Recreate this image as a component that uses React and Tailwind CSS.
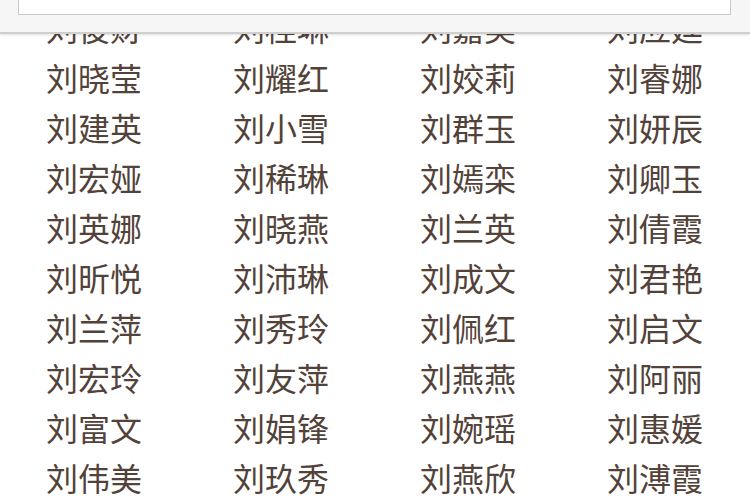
import React from "react";

const rows = [
  ["刘俊财", "刘桂琳", "刘嘉美", "刘应廷"],
  ["刘晓莹", "刘耀红", "刘姣莉", "刘睿娜"],
  ["刘建英", "刘小雪", "刘群玉", "刘妍辰"],
  ["刘宏娅", "刘稀琳", "刘嫣栾", "刘卿玉"],
  ["刘英娜", "刘晓燕", "刘兰英", "刘倩霞"],
  ["刘昕悦", "刘沛琳", "刘成文", "刘君艳"],
  ["刘兰萍", "刘秀玲", "刘佩红", "刘启文"],
  ["刘宏玲", "刘友萍", "刘燕燕", "刘阿丽"],
  ["刘富文", "刘娟锋", "刘婉瑶", "刘惠媛"],
  ["刘伟美", "刘玖秀", "刘燕欣", "刘溥霞"],
];

export default function App() {
  return (
    <div
      className="relative w-[750px] h-[500px] overflow-hidden bg-white"
      style={{ fontFamily: '"Noto Sans CJK SC", "Noto Sans", sans-serif' }}
    >
      <div className="pt-[2px] pl-[46px]">
        {rows.map((r, i) => (
          <div key={i} className="grid grid-cols-[187px_187px_187px_187px] h-[50px]">
            {r.map((n) => (
              <div key={n} className="text-[32px] leading-[50px] text-[#524239]">
                {n}
              </div>
            ))}
          </div>
        ))}
      </div>
      <div className="absolute top-0 left-0 w-[750px] h-[34px] bg-[#f6f6f6] border-b-2 border-[#cfcfcf] shadow-[0_1px_2px_rgba(0,0,0,0.12)]">
        <div className="ml-[18px] w-[713px] h-[15px] bg-white border border-t-0 border-[#c9c9c9]" />
      </div>
    </div>
  );
}
